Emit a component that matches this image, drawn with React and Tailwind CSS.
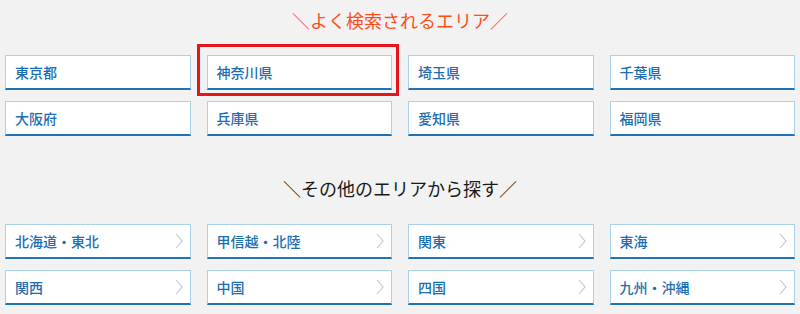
import React from "react";

const popular = ["東京都", "神奈川県", "埼玉県", "千葉県", "大阪府", "兵庫県", "愛知県", "福岡県"];
const others = ["北海道・東北", "甲信越・北陸", "関東", "東海", "関西", "中国", "四国", "九州・沖縄"];

function Card({ label, chevron, highlight }) {
  return (
    <div className="relative h-[35px] bg-white border border-[#a9d1ea] border-b-2 border-b-[#1f72b5] flex items-center pl-[9px] pr-[7px]">
      <span className="text-[14px] font-medium text-[#1d6eb1] leading-none flex-1">{label}</span>
      {chevron && (
        <svg width="8" height="16" viewBox="0 0 8 16" className="shrink-0">
          <polyline points="1,1 7,8 1,15" fill="none" stroke="#c4c4c4" strokeWidth="1.1" />
        </svg>
      )}
      {highlight && (
        <div className="absolute -left-[11px] -right-[8px] -top-[12px] -bottom-[8px] border-[3px] border-[#e8141c] pointer-events-none" />
      )}
    </div>
  );
}

export default function App() {
  return (
    <div
      className="w-[800px] h-[314px] bg-[#f2f2f2] overflow-hidden"
      style={{ fontFamily: '"Noto Sans CJK JP", "Noto Sans", sans-serif' }}
    >
      <div className="pt-[8px] h-[32px] text-center text-[18px] leading-[24px] text-[#ff4d1a]">＼よく検索されるエリア／</div>
      <div className="mt-[23px] px-[5px] grid grid-cols-4 gap-x-[16px] gap-y-[11px]">
        {popular.map((p, i) => (
          <Card key={p} label={p} highlight={i === 1} />
        ))}
      </div>
      <div className="mt-[40px] h-[24px] text-center text-[18px] leading-[24px] text-[#1a1a1a]">＼その他のエリアから探す／</div>
      <div className="mt-[24px] px-[5px] grid grid-cols-4 gap-x-[16px] gap-y-[11px]">
        {others.map((p) => (
          <Card key={p} label={p} chevron />
        ))}
      </div>
    </div>
  );
}
